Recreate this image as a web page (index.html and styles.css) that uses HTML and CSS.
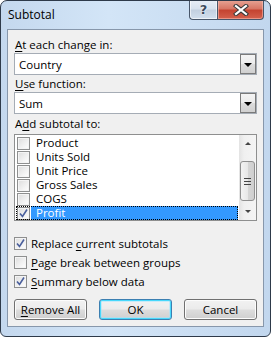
FILE: index.html
```html
<!DOCTYPE html>
<html>
<head>
<meta charset="utf-8">
<link rel="stylesheet" href="styles.css">
</head>
<body>
<div class="window">
  <div class="titlebar">
    <span class="title">Subtotal</span>
    <div class="caption-buttons">
      <div class="cap-btn help"><span class="help-glyph">?</span></div>
      <div class="cap-btn close">
        <svg width="16" height="12" viewBox="0 0 16 12">
          <path d="M3 2 L13 10 M13 2 L3 10" stroke="#3a3a3a" stroke-width="4.2" stroke-linecap="square" fill="none"/>
          <path d="M3 2 L13 10 M13 2 L3 10" stroke="#ffffff" stroke-width="2.2" stroke-linecap="square" fill="none"/>
        </svg>
      </div>
    </div>
  </div>
  <div class="content">
    <div class="label first"><u>A</u>t each change in:</div>
    <div class="combo">
      <span class="combo-text">Country</span>
      <span class="drop"><span class="tri"></span></span>
    </div>
    <div class="label"><u>U</u>se function:</div>
    <div class="combo">
      <span class="combo-text">Sum</span>
      <span class="drop"><span class="tri"></span></span>
    </div>
    <div class="label third">A<u>d</u>d subtotal to:</div>
    <div class="listbox">
      <div class="rows">
        <div class="row"><span class="cb"></span><span class="row-text">Product</span></div>
        <div class="row"><span class="cb"></span><span class="row-text">Units Sold</span></div>
        <div class="row"><span class="cb"></span><span class="row-text">Unit Price</span></div>
        <div class="row"><span class="cb"></span><span class="row-text">Gross Sales</span></div>
        <div class="row"><span class="cb"></span><span class="row-text">COGS</span></div>
        <div class="row selected"><span class="cb checked"><svg width="11" height="11" viewBox="0 0 11 11"><path d="M2 5.5 L4.5 8.5 L9 1.5" stroke="#4a5f9c" stroke-width="1.6" fill="none"/></svg></span><span class="row-text">Profit</span></div>
      </div>
      <div class="scrollbar">
        <div class="arrow up"></div>
        <div class="track">
          <div class="thumb"><span class="grip"></span><span class="grip"></span><span class="grip"></span></div>
        </div>
        <div class="arrow down"></div>
      </div>
    </div>
    <div class="options">
      <div class="opt"><span class="cb checked"><svg width="11" height="11" viewBox="0 0 11 11"><path d="M2 5.5 L4.5 8.5 L9 1.5" stroke="#4a5f9c" stroke-width="1.6" fill="none"/></svg></span><span>Replace <u>c</u>urrent subtotals</span></div>
      <div class="opt"><span class="cb"></span><span><u>P</u>age break between groups</span></div>
      <div class="opt"><span class="cb checked"><svg width="11" height="11" viewBox="0 0 11 11"><path d="M2 5.5 L4.5 8.5 L9 1.5" stroke="#4a5f9c" stroke-width="1.6" fill="none"/></svg></span><span><u>S</u>ummary below data</span></div>
    </div>
    <div class="buttons">
      <div class="btn"><u>R</u>emove All</div>
      <div class="btn default">OK</div>
      <div class="btn">Cancel</div>
    </div>
  </div>
</div>
</body>
</html>
```
FILE: styles.css
```css
* { box-sizing: border-box; }
html, body { margin: 0; padding: 0; background: #ffffff; }
body {
  font-family: "Open Sans", "Liberation Sans", Arial, sans-serif;
  font-size: 11.5px;
  color: #000;
}
u { text-underline-offset: 2px; }
.window {
  width: 271px;
  height: 337px;
  border: 1px solid #2e3a4a;
  border-radius: 7px 7px 6px 6px;
  background: linear-gradient(90deg, #c4d8ee 0%, #d3e5f7 40%, #c2d7ee 100%);
  display: flex;
  flex-direction: column;
  overflow: hidden;
}
.titlebar {
  height: 28px;
  display: flex;
  justify-content: space-between;
  align-items: flex-start;
  padding-left: 7px;
  padding-right: 6px;
  flex-shrink: 0;
}
.title {
  font-size: 12px;
  margin-top: 5px;
}
.caption-buttons {
  display: flex;
  margin-top: -1px;
}
.cap-btn {
  height: 20px;
  border: 1px solid #48566a;
  border-top: none;
  display: flex;
  align-items: center;
  justify-content: center;
}
.help {
  width: 28px;
  border-right: none;
  border-radius: 0 0 0 4px;
  background: linear-gradient(180deg, #e8eef6 0%, #d8e2ee 45%, #c3d0e0 55%, #d2dfee 100%);
  box-shadow: inset 0 0 0 1px rgba(255,255,255,0.6);
}
.help-glyph {
  font-family: "DejaVu Sans", sans-serif;
  font-weight: bold;
  font-size: 13px;
  color: #3d4a5c;
  text-shadow: 0 0 1px #fff, 0 0 2px #fff;
  margin-top: -1px;
}
.close {
  width: 47px;
  border-radius: 0 0 4px 0;
  background: linear-gradient(180deg, #e8a596 0%, #d87766 45%, #c54431 55%, #d4614d 100%);
  box-shadow: inset 0 0 0 1px rgba(255,200,190,0.5);
}
.content {
  flex: 1;
  margin: 0 6px 9px 6px;
  border: 1px solid #8797ab;
  background: #f0f0f0;
  padding: 0 6px;
  display: flex;
  flex-direction: column;
}
.label {
  height: 16px;
  line-height: 16px;
  padding-left: 1px;
  margin-top: 1px;
}
.label.first { margin-top: 7px; }
.label.third { margin-top: 2px; height: 18px; }
.combo {
  height: 22px;
  border: 1px solid #a5acb5;
  background: #fff;
  display: flex;
  align-items: center;
  justify-content: space-between;
}
.combo-text { padding-left: 4px; }
.drop {
  width: 16px;
  height: 20px;
  border: 1px solid #7a7a7a;
  background: linear-gradient(180deg, #f4f4f4 0%, #ebebeb 50%, #dcdcdc 51%, #d0d0d0 100%);
  display: flex;
  align-items: center;
  justify-content: center;
}
.tri {
  width: 0; height: 0;
  border-left: 4px solid transparent;
  border-right: 4px solid transparent;
  border-top: 4px solid #000;
  margin-top: 1px;
}
.listbox {
  height: 87px;
  border: 1px solid #8e8f8f;
  background: #fff;
  display: flex;
}
.rows {
  flex: 1;
  padding-top: 1px;
  padding-left: 1px;
}
.row {
  height: 14px;
  display: flex;
  align-items: center;
  gap: 6px;
  padding-left: 1px;
}
.row-text { line-height: 14px; }
.row.selected {
  outline: 1px dotted #000;
  outline-offset: -1px;
  margin-right: 1px;
}
.row.selected .row-text {
  background: #3399ff;
  color: #fff;
  flex: 1;
  height: 14px;
  padding-left: 5px;
  margin-left: -5px;
}
.cb {
  width: 13px;
  height: 13px;
  border: 1px solid #8e8f8f;
  background: linear-gradient(135deg, #dcdcdc 0%, #f2f2f2 60%, #ffffff 100%);
  box-shadow: inset 0 0 0 1px #f4f4f4;
  display: flex;
  align-items: center;
  justify-content: center;
  flex-shrink: 0;
}
.cb.checked svg { display: block; }
.scrollbar {
  width: 17px;
  display: flex;
  flex-direction: column;
  background: linear-gradient(90deg, #e3e3e3 0%, #f0f0f0 30%, #f4f4f4 100%);
}
.arrow {
  height: 17px;
  display: flex;
  align-items: center;
  justify-content: center;
}
.arrow::after {
  content: "";
  width: 0; height: 0;
  border-left: 3px solid transparent;
  border-right: 3px solid transparent;
}
.arrow.up::after { border-bottom: 3px solid #444; }
.arrow.down::after { border-top: 3px solid #444; }
.track {
  flex: 1;
  padding: 9px 1px 0 1px;
}
.thumb {
  height: 40px;
  border: 1px solid #8f8f8f;
  border-radius: 3px;
  background: linear-gradient(90deg, #f3f3f3 0%, #e8e8e8 50%, #d6d6d6 51%, #cfcfcf 100%);
  display: flex;
  flex-direction: column;
  align-items: center;
  justify-content: center;
  gap: 2px;
}
.grip {
  width: 7px;
  height: 1px;
  background: #444;
}
.options {
  margin-top: 13px;
  display: flex;
  flex-direction: column;
}
.opt {
  height: 19px;
  display: flex;
  align-items: center;
  gap: 4px;
}
.buttons {
  margin-top: 8px;
  display: flex;
  justify-content: space-between;
}
.btn {
  width: 73px;
  height: 21px;
  border: 1px solid #707070;
  border-radius: 3px;
  background: linear-gradient(180deg, #f2f2f2 0%, #ebebeb 48%, #dddddd 52%, #cfcfcf 100%);
  box-shadow: inset 0 0 0 1px #fcfcfc;
  display: flex;
  align-items: center;
  justify-content: center;
}
.btn.default {
  border-color: #3c7fb1;
  box-shadow: inset 0 0 0 1px #48d8fb, inset 0 0 0 2px rgba(160,230,255,0.5);
}
```
